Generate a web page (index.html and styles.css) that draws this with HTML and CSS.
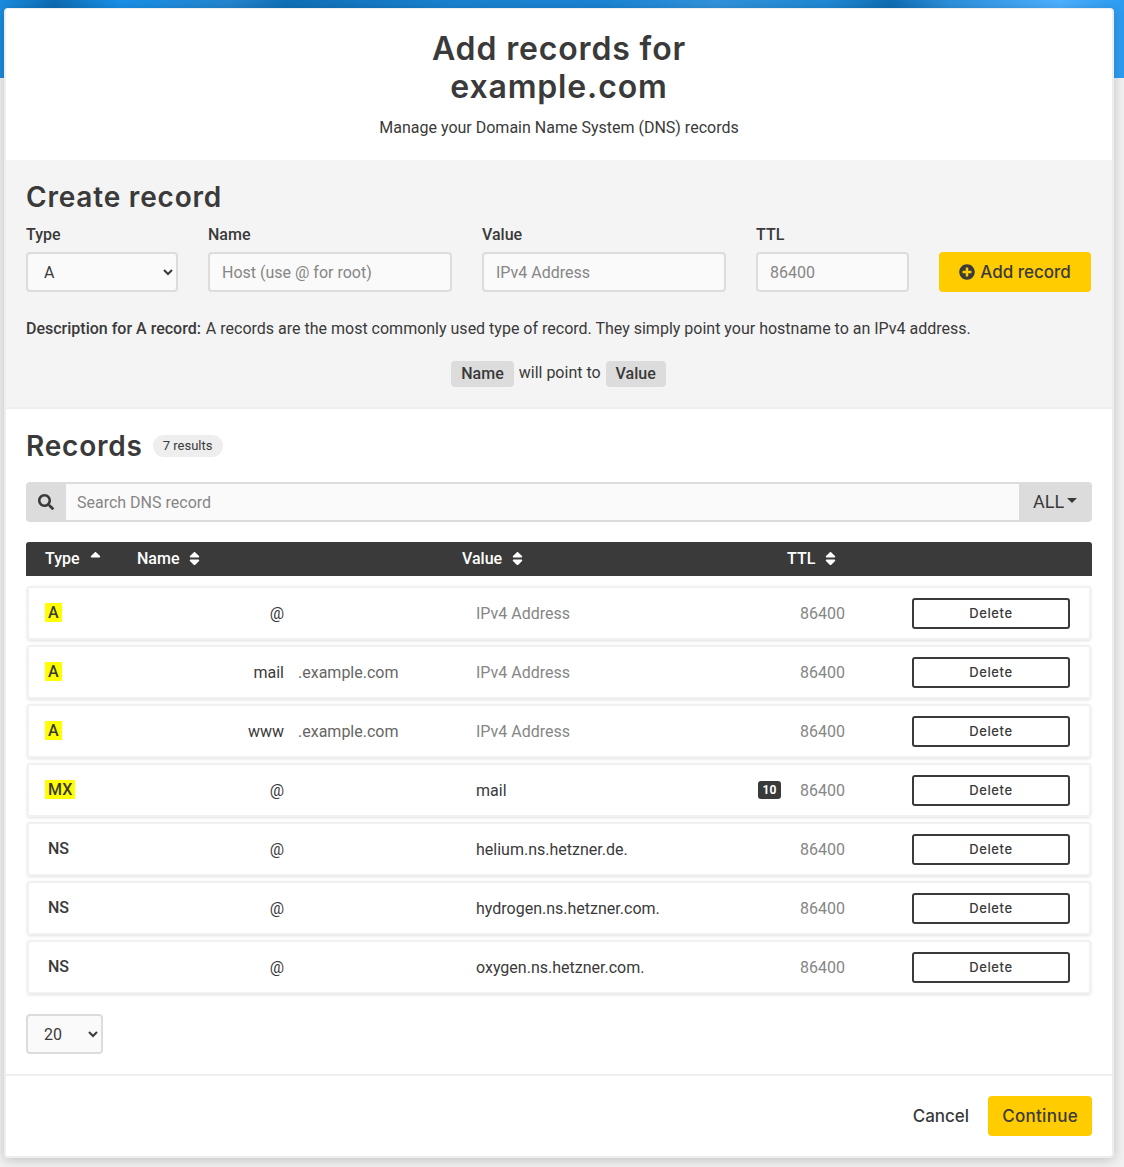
FILE: index.html
```html
<!DOCTYPE html>
<html lang="en">
<head>
    <meta charset="UTF-8">
    <meta name="viewport" content="width=device-width, initial-scale=1.0">
    <title>Add records for example.com</title>
    <link rel="stylesheet" href="styles.css">
</head>
<body>
    <div class="modal">
        <header class="modal-header">
            <h1>Add records for<br>example.com</h1>
            <p>Manage your Domain Name System (DNS) records</p>
        </header>

        <section class="create">
            <h2>Create record</h2>
            <div class="create-form">
                <label class="field">
                    <span>Type</span>
                    <select class="control"><option>A</option></select>
                </label>
                <label class="field">
                    <span>Name</span>
                    <input class="control" type="text" placeholder="Host (use @ for root)">
                </label>
                <label class="field">
                    <span>Value</span>
                    <input class="control" type="text" placeholder="IPv4 Address">
                </label>
                <label class="field">
                    <span>TTL</span>
                    <input class="control" type="text" placeholder="86400">
                </label>
                <button class="btn-primary add-btn" type="button">
                    <svg class="plus-icon" viewBox="0 0 512 512"><path d="M256 8C119 8 8 119 8 256s111 248 248 248 248-111 248-248S393 8 256 8zm144 276c0 6.6-5.4 12-12 12h-92v92c0 6.6-5.4 12-12 12h-56c-6.6 0-12-5.4-12-12v-92h-92c-6.6 0-12-5.4-12-12v-56c0-6.6 5.4-12 12-12h92v-92c0-6.6 5.4-12 12-12h56c6.6 0 12 5.4 12 12v92h92c6.6 0 12 5.4 12 12v56z"/></svg>
                    Add record
                </button>
            </div>
            <p class="description"><b>Description for A record:</b> A records are the most commonly used type of record. They simply point your hostname to an IPv4 address.</p>
            <p class="explain"><span class="chip">Name</span> will point to <span class="chip">Value</span></p>
        </section>

        <section class="records">
            <div class="records-title">
                <h2>Records</h2>
                <span class="count">7 results</span>
            </div>

            <div class="search">
                <span class="search-icon">
                    <svg viewBox="0 0 512 512"><path d="M505 442.7L405.3 343c-4.5-4.5-10.6-7-17-7H372c27.6-35.3 44-79.7 44-128C416 93.1 322.9 0 208 0S0 93.1 0 208s93.1 208 208 208c48.3 0 92.7-16.4 128-44v16.3c0 6.4 2.5 12.5 7 17l99.7 99.7c9.4 9.4 24.6 9.4 33.9 0l28.3-28.3c9.4-9.4 9.4-24.6.1-34zM208 336c-70.7 0-128-57.2-128-128 0-70.7 57.2-128 128-128 70.7 0 128 57.2 128 128 0 70.7-57.2 128-128 128z"/></svg>
                </span>
                <input class="search-input" type="text" placeholder="Search DNS record">
                <span class="search-filter">ALL<i class="caret"></i></span>
            </div>

            <div class="table-head">
                <span class="th th-type">Type <svg class="sort" viewBox="0 0 320 512"><path d="M279 224H41c-21.4 0-32.1-25.9-17-41L143 64c9.4-9.4 24.6-9.4 33.9 0l119 119c15.2 15.1 4.5 41-16.9 41z"/></svg></span>
                <span class="th th-name">Name <svg class="sort" viewBox="0 0 320 512"><path d="M41 288h238c21.4 0 32.1 25.9 17 41L177 448c-9.4 9.4-24.6 9.4-33.9 0L24 329c-15.1-15.1-4.4-41 17-41zm255-105L177 64c-9.4-9.4-24.6-9.4-33.9 0L24 183c-15.1 15.1-4.4 41 17 41h238c21.4 0 32.1-25.9 17-41z"/></svg></span>
                <span class="th th-value">Value <svg class="sort" viewBox="0 0 320 512"><path d="M41 288h238c21.4 0 32.1 25.9 17 41L177 448c-9.4 9.4-24.6 9.4-33.9 0L24 329c-15.1-15.1-4.4-41 17-41zm255-105L177 64c-9.4-9.4-24.6-9.4-33.9 0L24 183c-15.1 15.1-4.4 41 17 41h238c21.4 0 32.1-25.9 17-41z"/></svg></span>
                <span class="th th-ttl">TTL <svg class="sort" viewBox="0 0 320 512"><path d="M41 288h238c21.4 0 32.1 25.9 17 41L177 448c-9.4 9.4-24.6 9.4-33.9 0L24 329c-15.1-15.1-4.4-41 17-41zm255-105L177 64c-9.4-9.4-24.6-9.4-33.9 0L24 183c-15.1 15.1-4.4 41 17 41h238c21.4 0 32.1-25.9 17-41z"/></svg></span>
            </div>

            <div class="rows">
                <div class="row">
                    <span class="cell-type"><mark>A</mark></span>
                    <span class="cell-name">@</span>
                    <span class="cell-suffix"></span>
                    <span class="cell-value muted">IPv4 Address</span>
                    <span class="muted">86400</span>
                    <button class="btn-delete" type="button">Delete</button>
                </div>
                <div class="row">
                    <span class="cell-type"><mark>A</mark></span>
                    <span class="cell-name">mail</span>
                    <span class="cell-suffix">.example.com</span>
                    <span class="cell-value muted">IPv4 Address</span>
                    <span class="muted">86400</span>
                    <button class="btn-delete" type="button">Delete</button>
                </div>
                <div class="row">
                    <span class="cell-type"><mark>A</mark></span>
                    <span class="cell-name">www</span>
                    <span class="cell-suffix">.example.com</span>
                    <span class="cell-value muted">IPv4 Address</span>
                    <span class="muted">86400</span>
                    <button class="btn-delete" type="button">Delete</button>
                </div>
                <div class="row">
                    <span class="cell-type"><mark>MX</mark></span>
                    <span class="cell-name">@</span>
                    <span class="cell-suffix"></span>
                    <span class="cell-value">mail <span class="priority">10</span></span>
                    <span class="muted">86400</span>
                    <button class="btn-delete" type="button">Delete</button>
                </div>
                <div class="row">
                    <span class="cell-type">NS</span>
                    <span class="cell-name">@</span>
                    <span class="cell-suffix"></span>
                    <span class="cell-value">helium.ns.hetzner.de.</span>
                    <span class="muted">86400</span>
                    <button class="btn-delete" type="button">Delete</button>
                </div>
                <div class="row">
                    <span class="cell-type">NS</span>
                    <span class="cell-name">@</span>
                    <span class="cell-suffix"></span>
                    <span class="cell-value">hydrogen.ns.hetzner.com.</span>
                    <span class="muted">86400</span>
                    <button class="btn-delete" type="button">Delete</button>
                </div>
                <div class="row">
                    <span class="cell-type">NS</span>
                    <span class="cell-name">@</span>
                    <span class="cell-suffix"></span>
                    <span class="cell-value">oxygen.ns.hetzner.com.</span>
                    <span class="muted">86400</span>
                    <button class="btn-delete" type="button">Delete</button>
                </div>
            </div>

            <select class="control page-size"><option>20</option></select>
        </section>

        <footer class="modal-footer">
            <button class="btn-cancel" type="button">Cancel</button>
            <button class="btn-primary" type="button">Continue</button>
        </footer>
    </div>
</body>
</html>
```
FILE: styles.css
```css
* {
    box-sizing: border-box;
}

body {
    margin: 0;
    padding: 8px 10px 9px 4px;
    font-family: Roboto, sans-serif;
    font-size: 16px;
    color: #3a3a3a;
    background-color: #f1f1f1;
    background-image: linear-gradient(90deg, #1a8cdf 0, #0f6cb4 54px, #1890e8 120px, #2585ce 230px, #1070b8 287px, #1a82d0 450px, #1a84d4 600px, #3293dc 717px, #2088d4 830px, #0f6db4 890px, #2d90dc 950px, #4db0ff 1060px, #2b9bf0 1124px);
    background-size: 100% 78px;
    background-repeat: no-repeat;
}

.modal {
    background-color: #fff;
    border: 2px solid #eee;
    border-top-width: 1px;
    border-radius: 4px;
    box-shadow: 0 2px 12px rgba(0, 0, 0, 0.2);
    overflow: hidden;
}

h1, h2 {
    font-family: Inter, sans-serif;
    font-weight: 600;
    margin: 0;
}

.modal-header {
    height: 151px;
    padding-top: 21px;
    text-align: center;
}

.modal-header h1 {
    font-size: 32px;
    line-height: 38px;
    letter-spacing: 0.85px;
}

.modal-header p {
    margin: 10px 0 0;
    line-height: 24px;
}

.create {
    height: 249px;
    padding: 19px 21px 0 20px;
    background-color: #f4f4f4;
    border-bottom: 2px solid #eee;
}

.create h2,
.records h2 {
    font-size: 28px;
    line-height: 36px;
    letter-spacing: 0.8px;
}

.create-form {
    display: grid;
    grid-template-columns: 152px 244px 244px 153px 152px;
    column-gap: 30px;
    align-items: end;
    margin-top: 10px;
}

.field span {
    display: block;
    font-weight: 500;
    margin-bottom: 7px;
    line-height: 20px;
}

.control {
    display: block;
    width: 100%;
    height: 40px;
    padding: 0 12px;
    border: 2px solid #dcdcdc;
    border-radius: 4px;
    background-color: #fafafa;
    font-family: Roboto, sans-serif;
    font-size: 16px;
    color: #3a3a3a;
}

.control::placeholder,
.search-input::placeholder {
    color: #868686;
    opacity: 1;
}

.btn-primary {
    height: 40px;
    padding: 0 14px;
    border: none;
    border-radius: 4px;
    background-color: #ffcc00;
    color: #3a3a3a;
    font-family: Inter, sans-serif;
    font-size: 17px;
    font-weight: 500;
    letter-spacing: 0.3px;
}

.add-btn {
    display: flex;
    align-items: center;
    justify-content: center;
    gap: 5px;
    padding: 0;
    letter-spacing: 0;
}

.plus-icon {
    width: 16px;
    height: 16px;
    fill: #3a3a3a;
}

.description {
    margin: 27px 0 0;
    line-height: 20px;
}

.description b {
    font-weight: 500;
    margin-right: 1px;
}

.explain {
    margin: 21px 0 0;
    text-align: center;
    line-height: 26px;
}

.chip {
    display: inline-block;
    padding: 0 10px;
    margin: 0 1px;
    background-color: #dcdcdc;
    border-radius: 4px;
    font-weight: 500;
    vertical-align: -1px;
}

.records {
    padding: 19px 20px 20px 20px;
    border-bottom: 2px solid #eee;
}

.records-title {
    display: flex;
    align-items: center;
    gap: 10px;
}

.count {
    padding: 0 10px;
    height: 22px;
    line-height: 22px;
    background-color: #eee;
    border-radius: 11px;
    font-size: 13px;
}

.search {
    display: flex;
    height: 40px;
    margin-top: 18px;
    border-radius: 4px;
    overflow: hidden;
    background-color: #dcdcdc;
}

.search-icon {
    display: flex;
    align-items: center;
    justify-content: center;
    width: 40px;
}

.search-icon svg {
    width: 16px;
    height: 16px;
    fill: #3a3a3a;
}

.search-input {
    flex: 1;
    min-width: 0;
    margin: 2px 0;
    padding: 0 11px;
    border: none;
    background-color: #fafafa;
    font-family: Roboto, sans-serif;
    font-size: 16px;
}

.search-filter {
    display: flex;
    align-items: center;
    width: 73px;
    padding: 0 0 2px 14px;
    font-size: 18px;
}

.caret {
    width: 0;
    height: 0;
    margin: 0 0 2px 3px;
    border: 5px solid transparent;
    border-top-color: #3a3a3a;
    border-bottom-width: 0;
}

.table-head {
    display: grid;
    grid-template-columns: 92px 325px 325px 1fr;
    align-items: center;
    height: 34px;
    margin-top: 20px;
    padding: 0 0 2px 19px;
    background-color: #3a3a3a;
    border-radius: 3px 3px 0 0;
    color: #fff;
    font-weight: 500;
}

.sort {
    width: 11px;
    height: 17px;
    margin-left: 6px;
    fill: #fff;
    vertical-align: -3px;
}

.rows {
    display: flex;
    flex-direction: column;
    gap: 5px;
    margin: 10px 1px 0;
}

.row {
    display: grid;
    grid-template-columns: 103px 134px 192px 324px 112px 158px;
    align-items: center;
    height: 54px;
    padding-left: 18px;
    border: 2px solid #f1f1f1;
    border-radius: 3px;
    box-shadow: 0 1px 3px rgba(0, 0, 0, 0.12);
}

.cell-type {
    position: relative;
    top: -1px;
    padding-left: 1px;
    font-weight: 500;
}

mark {
    padding: 0 3px;
    margin-left: -3px;
    background-color: #ffff00;
    color: #3a3a3a;
}

.cell-name {
    text-align: right;
}

.cell-suffix {
    padding-left: 14px;
    color: #666;
}

.cell-value {
    display: flex;
    justify-content: space-between;
    align-items: center;
    padding-right: 19px;
}

.muted {
    color: #868686;
}

.priority {
    width: 23px;
    height: 18px;
    line-height: 18px;
    text-align: center;
    background-color: #3a3a3a;
    border-radius: 3px;
    color: #fff;
    font-size: 12px;
    font-weight: 700;
}

.btn-delete {
    height: 31px;
    border: 2px solid #3a3a3a;
    border-radius: 3px;
    background-color: #fff;
    color: #3a3a3a;
    font-family: Inter, sans-serif;
    font-size: 13px;
    font-weight: 500;
    letter-spacing: 0.6px;
}

.page-size {
    width: 77px;
    margin-top: 20px;
    padding-left: 12px;
}

.modal-footer {
    display: flex;
    justify-content: flex-end;
    align-items: center;
    gap: 19px;
    height: 80px;
    padding: 0 20px 1px 0;
}

.btn-cancel {
    border: none;
    background: none;
    padding: 0;
    color: #3a3a3a;
    font-family: Inter, sans-serif;
    font-size: 17px;
    font-weight: 500;
}
```
